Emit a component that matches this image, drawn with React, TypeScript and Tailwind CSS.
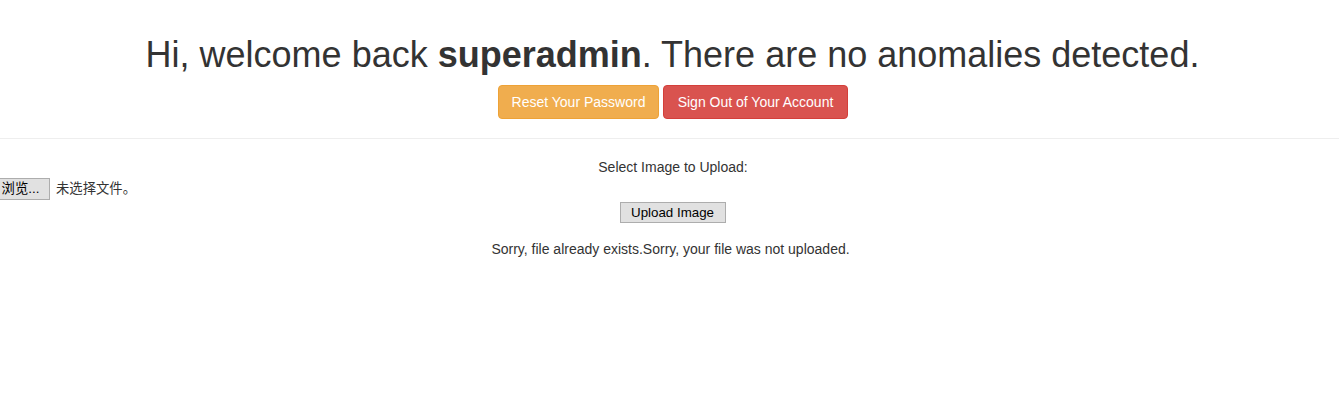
export default function App() {
  return (
    <div className="w-[1339px] h-[406px] bg-white overflow-hidden text-[#333] text-[14px] leading-[20px]" style={{ fontFamily: '"Liberation Sans", Arial, sans-serif' }}>
      <div className="flex flex-col items-center pt-[35px] pl-[6px]">
        <h1 className="text-[36px] leading-[39.6px] font-normal text-[#333]">
          Hi, welcome back <b className="font-bold">superadmin</b>. There are no anomalies detected.
        </h1>
        <div className="flex gap-[4px] mt-[10px] pl-[1px]">
          <button className="h-[34px] w-[161px] rounded-[4px] bg-[#f0ad4e] border border-[#eea236] text-white text-[14px]">Reset Your Password</button>
          <button className="h-[34px] w-[185px] rounded-[4px] bg-[#d9534f] border border-[#d43f3a] text-white text-[14px]">Sign Out of Your Account</button>
        </div>
      </div>
      <div className="mt-[19px] border-t border-[#eee]" />
      <div className="flex flex-col items-center mt-[18px] pl-[7px]">
        <div className="text-[#333]">Select Image to Upload:</div>
      </div>
      <div className="flex items-center mt-[1px] h-[22px] ml-[-9px]">
        <span className="h-[22px] w-[59px] flex items-center justify-center bg-[#e1e1e1] border border-[#adadad] text-black text-[13.33px]" style={{ fontFamily: '"Liberation Sans", "Noto Sans CJK SC", sans-serif' }}>浏览...</span>
        <span className="ml-[6px] text-[13.33px] text-[#333]" style={{ fontFamily: '"Liberation Sans", "Noto Sans CJK SC", sans-serif' }}>未选择文件。</span>
      </div>
      <div className="flex flex-col items-center mt-[2px] pl-[6px]">
        <button className="h-[21px] w-[106px] bg-[#e1e1e1] border border-[#adadad] text-black text-[13.33px] leading-[19px]">Upload Image</button>
      </div>
      <div className="flex flex-col items-center mt-[16px] pl-[2px]">
        <div className="text-[#333]">Sorry, file already exists.Sorry, your file was not uploaded.</div>
      </div>
    </div>
  );
}
